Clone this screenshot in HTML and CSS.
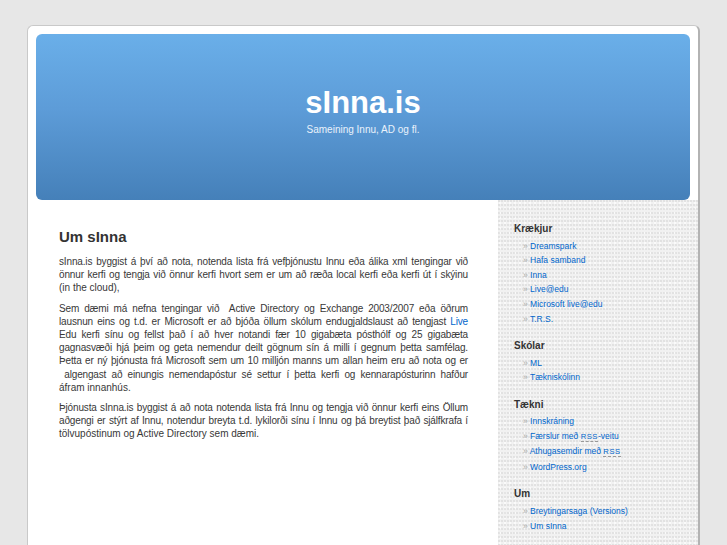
FILE: index.html
```html
<!DOCTYPE html>
<html lang="is">
<head>
<meta charset="utf-8">
<title>sInna.is</title>
<link rel="stylesheet" href="styles.css">
</head>
<body>
<div class="page">
  <div class="header-wrap">
    <header class="header">
      <h1 class="site-title">sInna.is</h1>
      <div class="site-desc">Sameining Innu, AD og fl.</div>
    </header>
  </div>
  <div class="columns">
    <main class="main">
      <h2 class="post-title">Um sInna</h2>
      <p><span class="ln">sInna.is byggist á því að nota, notenda lista frá vefþjónustu Innu eða álika xml tengingar við</span>
        <span class="ln">önnur kerfi og tengja við önnur kerfi hvort sem er um að ræða local kerfi eða kerfi út í skýinu</span>
        <span class="ln last">(in the cloud),</span></p>
      <p><span class="ln">Sem dæmi má nefna tengingar við&nbsp; Active Directory og Exchange 2003/2007 eða öðrum</span>
        <span class="ln">lausnun eins og t.d. er Microsoft er að bjóða öllum skólum endugjaldslaust að tengjast <a href="#">Live</a></span>
        <span class="ln">Edu kerfi sínu og fellst það í að hver notandi fær 10 gigabæta pósthólf og 25 gigabæta</span>
        <span class="ln">gagnasvæði hjá þeim og geta nemendur deilt gögnum sín á milli í gegnum þetta samfélag.</span>
        <span class="ln">Þetta er ný þjónusta frá Microsoft sem um 10 milljón manns um allan heim eru að nota og er</span>
        <span class="ln">&nbsp;algengast að einungis nemendapóstur sé settur í þetta kerfi og kennarapósturinn hafður</span>
        <span class="ln last">áfram innanhús.</span></p>
      <p><span class="ln">Þjónusta sInna.is byggist á að nota notenda lista frá Innu og tengja við önnur kerfi eins Öllum</span>
        <span class="ln">aðgengi er stýrt af Innu, notendur breyta t.d. lykilorði sínu í Innu og þá breytist það sjálfkrafa í</span>
        <span class="ln last">tölvupóstinum og Active Directory sem dæmi.</span></p>
    </main>
    <aside class="sidebar">
      <h3 class="side-title">Krækjur</h3>
      <ul class="side-list">
        <li><a href="#">Dreamspark</a></li>
        <li><a href="#">Hafa samband</a></li>
        <li><a href="#">Inna</a></li>
        <li><a href="#">Live@edu</a></li>
        <li><a href="#">Microsoft live@edu</a></li>
        <li><a href="#">T.R.S.</a></li>
      </ul>
      <h3 class="side-title">Skólar</h3>
      <ul class="side-list">
        <li><a href="#">ML</a></li>
        <li><a href="#">Tækniskólinn</a></li>
      </ul>
      <h3 class="side-title">Tækni</h3>
      <ul class="side-list">
        <li><a href="#">Innskráning</a></li>
        <li><a href="#">Færslur með <abbr title="Really Simple Syndication">RSS</abbr>-veitu</a></li>
        <li><a href="#">Athugasemdir með <abbr title="Really Simple Syndication">RSS</abbr></a></li>
        <li><a href="#">WordPress.org</a></li>
      </ul>
      <h3 class="side-title">Um</h3>
      <ul class="side-list">
        <li><a href="#">Breytingarsaga (Versions)</a></li>
        <li><a href="#">Um sInna</a></li>
      </ul>
    </aside>
  </div>
</div>
</body>
</html>
```
FILE: styles.css
```css
html, body {
  margin: 0;
  padding: 0;
}
body {
  background: #e7e7e7;
  font-family: "Liberation Sans", Arial, sans-serif;
  color: #333;
  height: 545px;
  overflow: hidden;
}
a {
  color: #0066cc;
  text-decoration: none;
}
.page {
  margin: 25px 0 0 27px;
  width: 670px;
  background: #fff;
  border: 1px solid #c9c9c9;
  border-right: 2px solid #b3b3b3;
  border-bottom: none;
  border-radius: 6px 6px 0 0;
  min-height: 540px;
}
.header-wrap {
  padding: 8px 8px 0 8px;
}
.header {
  height: 166px;
  border-radius: 6px;
  background: linear-gradient(to bottom, #6aafe9 0%, #5d9cd8 45%, #4580b9 100%);
  text-align: center;
  color: #fff;
  box-sizing: border-box;
  padding-top: 51px;
}
.site-title {
  margin: 0;
  font-size: 31px;
  line-height: 36px;
  font-weight: bold;
  color: #fff;
}
.site-desc {
  margin-top: 2px;
  font-size: 10px;
  line-height: 14px;
  color: #eaf2fb;
}
.columns {
  display: flex;
  min-height: 345px;
}
.main {
  width: 470px;
  box-sizing: border-box;
  padding: 28px 30px 0 31px;
}
.post-title {
  margin: 0 0 9px 0;
  font-size: 15px;
  line-height: 18px;
  font-weight: bold;
  color: #333;
}
.main p {
  margin: 0 0 7px 0;
  font-size: 10px;
  line-height: 13.2px;
  color: #383838;
}
.ln {
  display: block;
  white-space: nowrap;
  text-align: justify;
  text-align-last: justify;
  letter-spacing: -0.15px;
}
.ln.last {
  text-align-last: left;
  letter-spacing: 0;
}
.sidebar {
  width: 200px;
  box-sizing: border-box;
  padding: 23px 10px 20px 16px;
  background-color: #f1f1f1;
  background-image:
    radial-gradient(circle at 1px 1px, #d9d9d9 0.6px, transparent 0.9px),
    radial-gradient(circle at 2px 3px, #ffffff 0.6px, transparent 0.9px);
  background-size: 3px 4px, 5px 5px;
}
.side-title {
  margin: 0;
  font-size: 10px;
  line-height: 12px;
  font-weight: bold;
  color: #333;
}
.side-list {
  list-style: none;
  margin: 3.7px 0 13.7px 0;
  padding: 0 0 0 9px;
}
.side-list li {
  font-size: 8.5px;
  line-height: 14.6px;
  white-space: nowrap;
}
.side-list li::before {
  content: "\00BB\0020";
  color: #aaa;
}
abbr {
  text-decoration: none;
  border-bottom: 1px dashed #999;
  font-size: 0.9em;
  letter-spacing: 0.07em;
}
```
